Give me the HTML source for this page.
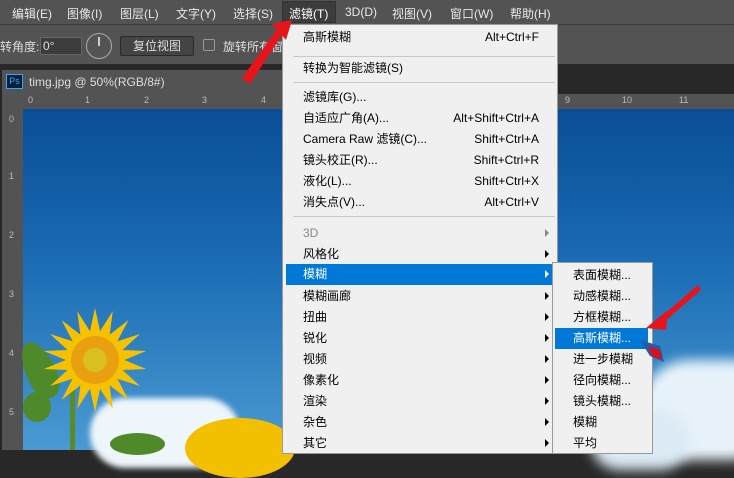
<!DOCTYPE html><html><head><meta charset="utf-8"><style>
*{margin:0;padding:0;box-sizing:border-box}
body{width:734px;height:450px;overflow:hidden;background:#282828;font-family:"Liberation Sans","Noto Sans CJK SC",sans-serif;position:relative;font-size:12px}
.a{position:absolute}
.mb{left:0;top:0;width:734px;height:24px;background:#535353;color:#e8e8e8;font-size:12px}
.mb span{position:absolute;top:5px}
.ob{left:0;top:24px;width:734px;height:40px;background:#535353;border-top:1px solid #3a3a3a;color:#ddd}
.menu{left:282px;top:24px;width:276px;height:430px;background:#f0f0f0;border:1px solid #999;color:#000;font-size:12px}
.it{position:absolute;left:20px;height:21px;line-height:21px}
.sc{position:absolute;right:18px;height:21px;line-height:21px}
.sep{position:absolute;left:10px;right:2px;height:1px;background:#c8c8c8}
.ar{position:absolute;right:8px;width:0;height:0;border-left:4px solid #000;border-top:4px solid transparent;border-bottom:4px solid transparent}
.sub{left:552px;top:262px;width:101px;height:192px;background:#f0f0f0;border:1px solid #999;font-size:12px}
.si{position:absolute;left:20px;height:21px;line-height:21px}
</style></head><body>
<div class="a mb">
<span style="left:12px">编辑(E)</span><span style="left:67px">图像(I)</span><span style="left:120px">图层(L)</span><span style="left:176px">文字(Y)</span><span style="left:233px">选择(S)</span>
<div class="a" style="left:282px;top:1px;width:54px;height:22px;background:#3c3c3c;border:1px solid #333"></div>
<span style="left:289px;color:#fff">滤镜(T)</span><span style="left:345px">3D(D)</span><span style="left:392px">视图(V)</span><span style="left:450px">窗口(W)</span><span style="left:510px">帮助(H)</span>
</div>
<div class="a ob">
<span class="a" style="left:0;top:13px">转角度:</span>
<div class="a" style="left:40px;top:12px;width:42px;height:18px;background:#3c3c3c;border:1px solid #666;padding-left:2px;line-height:16px">0°</div>
<div class="a" style="left:86px;top:8px;width:26px;height:26px;border:1px solid #aaa;border-radius:50%"></div>
<div class="a" style="left:98px;top:12px;width:2px;height:9px;background:#ccc"></div>
<div class="a" style="left:120px;top:11px;width:74px;height:20px;background:#444;border:1px solid #2a2a2a;border-radius:2px;text-align:center;line-height:18px">复位视图</div>
<div class="a" style="left:203px;top:14px;width:12px;height:12px;border:1px solid #999;border-radius:2px"></div>
<span class="a" style="left:223px;top:13px">旋转所有窗</span>
</div>
<div class="a" style="left:2px;top:70px;width:280px;height:24px;background:#535353;color:#ddd">
<div class="a" style="left:4px;top:4px;width:17px;height:15px;border:1px solid #31a8ff;background:#001e36;color:#31a8ff;font-size:9px;text-align:center;line-height:13px">Ps</div>
<span class="a" style="left:27px;top:5px">timg.jpg @ 50%(RGB/8#)</span></div>
<div class="a" style="left:2px;top:94px;width:280px;height:15px;background:#535353;color:#bbb;font-size:9px">
<span class="a" style="left:26px;top:1px">0</span><span class="a" style="left:83px;top:1px">1</span><span class="a" style="left:142px;top:1px">2</span><span class="a" style="left:200px;top:1px">3</span><span class="a" style="left:259px;top:1px">4</span></div>
<div class="a" style="left:2px;top:109px;width:21px;height:341px;background:#535353;color:#bbb;font-size:9px">
<span class="a" style="left:7px;top:5px">0</span><span class="a" style="left:7px;top:62px">1</span><span class="a" style="left:7px;top:121px">2</span><span class="a" style="left:7px;top:180px">3</span><span class="a" style="left:7px;top:239px">4</span><span class="a" style="left:7px;top:298px">5</span></div>
<div class="a" style="left:557px;top:94px;width:177px;height:15px;background:#535353;color:#bbb;font-size:9px"><span class="a" style="left:8px;top:1px">9</span><span class="a" style="left:65px;top:1px">10</span><span class="a" style="left:122px;top:1px">11</span></div>
<div class="a" style="left:23px;top:109px;width:711px;height:341px;background:linear-gradient(180deg,#0a4e96 0%,#1a6cb4 45%,#4a9ad2 100%)"></div>
<div class="a" style="left:640px;top:360px;width:140px;height:100px;background:#e8f2fa;border-radius:50px;filter:blur(6px)"></div>
<div class="a" style="left:590px;top:410px;width:100px;height:60px;background:#dceaf5;border-radius:40px;filter:blur(6px)"></div>
<div class="a" style="left:90px;top:398px;width:150px;height:70px;background:#eef5fb;border-radius:40px;filter:blur(3px)"></div>
<div class="a" style="left:25px;top:340px;width:30px;height:60px;background:#4f8a2a;border-radius:50% 50% 50% 50%/60% 60% 40% 40%;transform:rotate(-25deg)"></div>
<div class="a" style="left:23px;top:392px;width:28px;height:30px;background:#4f8a2a;border-radius:50%"></div>
<div class="a" style="left:70px;top:385px;width:5px;height:65px;background:#5a8a2a"></div>
<div class="a" style="left:110px;top:433px;width:55px;height:22px;background:#4f8a2a;border-radius:50%"></div>
<svg class="a" style="left:40px;top:305px" width="110" height="110" viewBox="-55 -55 110 110">
<g fill="#f6c200">
<path d="M0,-52 L7,-20 L-7,-20Z" transform="rotate(0)"/><path d="M0,-52 L7,-20 L-7,-20Z" transform="rotate(20)"/><path d="M0,-52 L7,-20 L-7,-20Z" transform="rotate(40)"/><path d="M0,-52 L7,-20 L-7,-20Z" transform="rotate(60)"/><path d="M0,-52 L7,-20 L-7,-20Z" transform="rotate(80)"/><path d="M0,-52 L7,-20 L-7,-20Z" transform="rotate(100)"/><path d="M0,-52 L7,-20 L-7,-20Z" transform="rotate(120)"/><path d="M0,-52 L7,-20 L-7,-20Z" transform="rotate(140)"/><path d="M0,-52 L7,-20 L-7,-20Z" transform="rotate(160)"/><path d="M0,-52 L7,-20 L-7,-20Z" transform="rotate(180)"/><path d="M0,-52 L7,-20 L-7,-20Z" transform="rotate(200)"/><path d="M0,-52 L7,-20 L-7,-20Z" transform="rotate(220)"/><path d="M0,-52 L7,-20 L-7,-20Z" transform="rotate(240)"/><path d="M0,-52 L7,-20 L-7,-20Z" transform="rotate(260)"/><path d="M0,-52 L7,-20 L-7,-20Z" transform="rotate(280)"/><path d="M0,-52 L7,-20 L-7,-20Z" transform="rotate(300)"/><path d="M0,-52 L7,-20 L-7,-20Z" transform="rotate(320)"/><path d="M0,-52 L7,-20 L-7,-20Z" transform="rotate(340)"/>
</g>
<circle r="24" fill="#e8a010"/><circle r="12" fill="#d8c020"/>
</svg>
<div class="a" style="left:185px;top:418px;width:110px;height:60px;background:#f3c000;border-radius:50%"></div>
<div class="a menu">
<div class="it" style="top:2px">高斯模糊</div><div class="sc" style="top:2px">Alt+Ctrl+F</div>
<div class="sep" style="top:31px"></div>
<div class="it" style="top:33px">转换为智能滤镜(S)</div>
<div class="sep" style="top:57px"></div>
<div class="it" style="top:62px">滤镜库(G)...</div>
<div class="it" style="top:83px">自适应广角(A)...</div><div class="sc" style="top:83px">Alt+Shift+Ctrl+A</div>
<div class="it" style="top:104px">Camera Raw 滤镜(C)...</div><div class="sc" style="top:104px">Shift+Ctrl+A</div>
<div class="it" style="top:125px">镜头校正(R)...</div><div class="sc" style="top:125px">Shift+Ctrl+R</div>
<div class="it" style="top:146px">液化(L)...</div><div class="sc" style="top:146px">Shift+Ctrl+X</div>
<div class="it" style="top:167px">消失点(V)...</div><div class="sc" style="top:167px">Alt+Ctrl+V</div>
<div class="sep" style="top:191px"></div>
<div class="it" style="top:198px;color:#888">3D</div><div class="ar" style="top:204px;border-left-color:#888"></div>
<div class="it" style="top:219px">风格化</div><div class="ar" style="top:225px"></div>
<div class="a" style="left:3px;top:239px;width:271px;height:21px;background:#0078d7"></div>
<div class="it" style="top:239px;color:#fff">模糊</div><div class="ar" style="top:245px;border-left-color:#fff"></div>
<div class="it" style="top:261px">模糊画廊</div><div class="ar" style="top:267px"></div>
<div class="it" style="top:282px">扭曲</div><div class="ar" style="top:288px"></div>
<div class="it" style="top:303px">锐化</div><div class="ar" style="top:309px"></div>
<div class="it" style="top:324px">视频</div><div class="ar" style="top:330px"></div>
<div class="it" style="top:345px">像素化</div><div class="ar" style="top:351px"></div>
<div class="it" style="top:366px">渲染</div><div class="ar" style="top:372px"></div>
<div class="it" style="top:387px">杂色</div><div class="ar" style="top:393px"></div>
<div class="it" style="top:408px">其它</div><div class="ar" style="top:414px"></div>
</div>
<div class="a sub">
<div class="si" style="top:2px">表面模糊...</div>
<div class="si" style="top:23px">动感模糊...</div>
<div class="si" style="top:44px">方框模糊...</div>
<div class="a" style="left:2px;top:65px;width:93px;height:21px;background:#0078d7"></div>
<div class="si" style="top:65px;color:#fff">高斯模糊...</div>
<div class="si" style="top:86px">进一步模糊</div>
<div class="si" style="top:107px">径向模糊...</div>
<div class="si" style="top:128px">镜头模糊...</div>
<div class="si" style="top:149px">模糊</div>
<div class="si" style="top:170px">平均</div>
</div>
<svg class="a" style="left:0;top:0" width="734" height="450">
<polygon points="242,78 278,28 288,22 283,33 250,84" fill="#e8141c"/>
<polygon points="272,24 292,20 286,40" fill="#e8141c"/>
<polygon points="698,285 660,318 664,322 701,290" fill="#e8141c"/>
<polygon points="646,328 668,310 666,330" fill="#e8141c"/>
<polygon points="640,340 660,346 664,362 650,356" fill="#1d5fa8"/>
<polygon points="648,346 660,350 662,360 652,356" fill="#d81020"/>
</svg>
</body></html>
